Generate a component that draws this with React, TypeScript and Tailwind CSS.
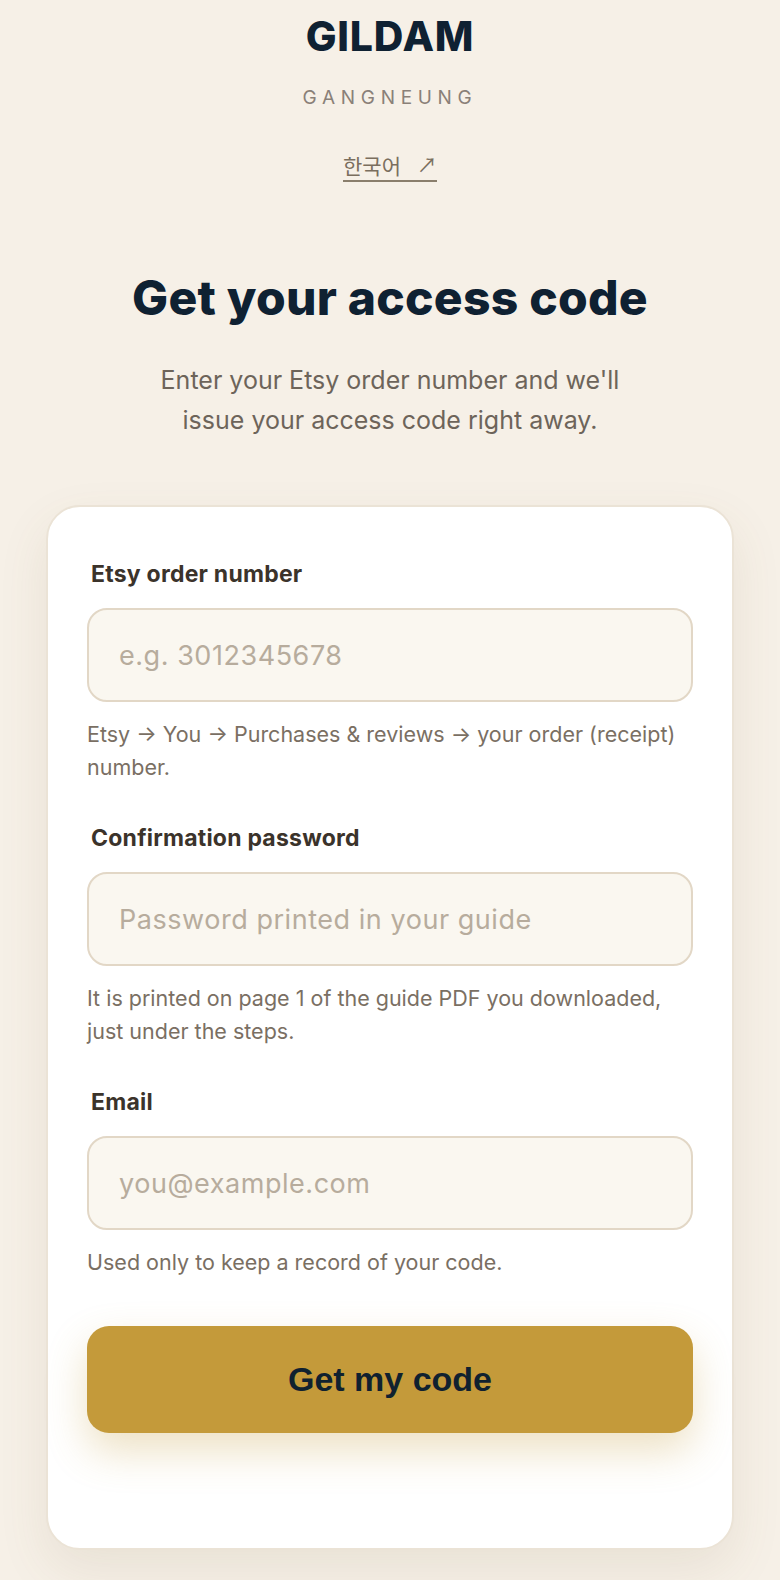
import React from "react";

const Field = ({
  label,
  placeholder,
  help,
  type = "text",
}: {
  label: string;
  placeholder: string;
  help: string;
  type?: string;
}) => (
  <div className="flex flex-col">
    <label className="pl-[4px] text-[23px] font-bold leading-[26px] tracking-[0.01em] text-[#3b332b]">{label}</label>
    <input
      type={type}
      placeholder={placeholder}
      className="mt-[21px] h-[94px] w-full rounded-[20px] border-2 border-[#e2d7c6] bg-[#faf7f0] px-[30px] text-[27px] tracking-[0.02em] text-[#2a241e] outline-none placeholder:text-[#b7ac9d]"
    />
    <p className="mt-[16px] text-[21.5px] leading-[33px] text-[#7a6f63]">{help}</p>
  </div>
);

export default function App() {
  return (
    <div
      className="min-h-[1580px] w-full bg-[#f6f0e7] pb-[34px]"
      style={{ fontFamily: "Inter, 'Noto Sans CJK KR', sans-serif" }}
    >
      <header className="flex flex-col items-center pt-[14px]">
        <h1 className="text-[41px] font-extrabold leading-[44px] tracking-[0.02em] text-[#0f2132]">GILDAM</h1>
        <p className="mt-[30px] text-[19px] leading-[20px] tracking-[0.3em] text-[#8a8078]">GANGNEUNG</p>
        <a
          href="#"
          className="mt-[45px] flex items-center border-b-2 border-[#8a7e6c] pb-[3px] text-[21px] leading-[24px] text-[#7a6e5e]"
          style={{ fontFamily: "'Noto Sans CJK KR', Inter, sans-serif" }}
        >
          <span>한국어</span>
          <span className="pl-[16px] text-[20px]">↗</span>
        </a>
      </header>

      <section className="mt-[88px] flex flex-col items-center px-[40px] text-center">
        <h2 className="text-[48px] font-extrabold leading-[56px] tracking-[0.005em] text-[#0f2132]">
          Get your access code
        </h2>
        <p className="mt-[34px] max-w-[520px] text-[25px] leading-[40px] text-[#6d645a]">
          Enter your Etsy order number and we'll issue your access code right away.
        </p>
      </section>

      <main className="mx-[46px] mt-[65px] rounded-[34px] border-2 border-[#ebe3d6] bg-white px-[39px] pb-[115px] pt-[54px] shadow-[0_20px_50px_rgba(120,100,60,0.10)]">
        <form className="flex flex-col gap-[41px]" onSubmit={(e) => e.preventDefault()}>
          <Field
            label="Etsy order number"
            placeholder="e.g. 3012345678"
            help="Etsy → You → Purchases & reviews → your order (receipt) number."
          />
          <Field
            label="Confirmation password"
            placeholder="Password printed in your guide"
            help="It is printed on page 1 of the guide PDF you downloaded, just under the steps."
          />
          <Field label="Email" type="email" placeholder="you@example.com" help="Used only to keep a record of your code." />
          <button
            type="submit"
            className="mt-[6px] h-[107px] w-full rounded-[22px] bg-[#c49a3a] text-[34px] font-bold text-[#10212f] shadow-[0_18px_40px_rgba(196,154,58,0.30)]"
            style={{ fontFamily: "'Liberation Sans', Arial, sans-serif" }}
          >
            Get my code
          </button>
        </form>
      </main>
    </div>
  );
}
